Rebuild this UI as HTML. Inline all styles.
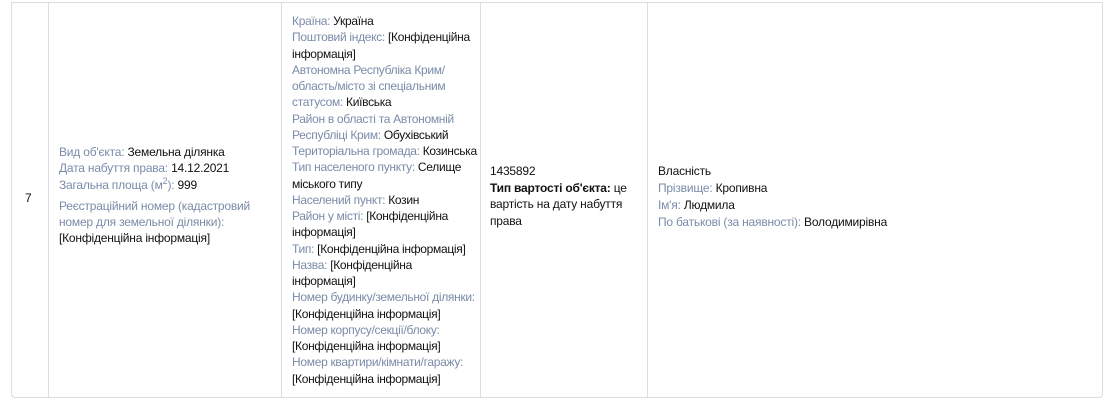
<!DOCTYPE html>
<html><head><meta charset="utf-8"><style>
*{margin:0;padding:0;box-sizing:border-box}
body{width:1116px;height:411px;background:#fff;font-family:"Liberation Sans",Arial,sans-serif;font-size:12px;color:#111;position:relative;overflow:hidden;letter-spacing:-0.2px}
.box{position:absolute;left:11px;top:2px;width:1092px;height:396px;border:1px solid #dcdde4;border-radius:0 0 4px 4px}
.v{position:absolute;top:2px;height:395px;width:1px;background:#dcdde4}
.c{position:absolute;line-height:16.25px;white-space:nowrap}
.l{color:#7a8ba8}
</style></head><body>
<div class="box"></div>
<div class="v" style="left:48px"></div>
<div class="v" style="left:281px"></div>
<div class="v" style="left:480px"></div>
<div class="v" style="left:647px"></div>
<div class="c" style="left:25px;top:190px">7</div>
<div class="c" style="left:59px;top:144px">
<div><span class="l">Вид об'єкта:</span> Земельна ділянка</div>
<div><span class="l">Дата набуття права:</span> 14.12.2021</div>
<div><span class="l">Загальна площа (м<sup style="font-size:9px;line-height:0">2</sup>):</span> 999</div>
<div style="margin-top:5px"><span class="l">Реєстраційний номер (кадастровий<br>номер для земельної ділянки):</span><br>[Конфіденційна інформація]</div>
</div>
<div class="c" style="left:292px;top:13px;letter-spacing:-0.3px">
<span class="l">Країна:</span> Україна<br>
<span class="l">Поштовий індекс:</span> [Конфіденційна<br>інформація]<br>
<span class="l">Автономна Республіка Крим/<br>область/місто зі спеціальним<br>статусом:</span> Київська<br>
<span class="l">Район в області та Автономній<br>Республіці Крим:</span> Обухівський<br>
<span class="l">Територіальна громада:</span> Козинська<br>
<span class="l">Тип населеного пункту:</span> Селище<br>міського типу<br>
<span class="l">Населений пункт:</span> Козин<br>
<span class="l">Район у місті:</span> [Конфіденційна<br>інформація]<br>
<span class="l">Тип:</span> [Конфіденційна інформація]<br>
<span class="l">Назва:</span> [Конфіденційна<br>інформація]<br>
<span class="l">Номер будинку/земельної ділянки:</span><br>[Конфіденційна інформація]<br>
<span class="l">Номер корпусу/секції/блоку:</span><br>[Конфіденційна інформація]<br>
<span class="l">Номер квартири/кімнати/гаражу:</span><br>[Конфіденційна інформація]
</div>
<div class="c" style="left:490px;top:163px;line-height:16.7px">
1435892<br>
<b>Тип вартості об'єкта:</b> це<br>вартість на дату набуття<br>права
</div>
<div class="c" style="left:658px;top:163px;line-height:17px">
Власність<br>
<span class="l">Прізвище:</span> Кропивна<br>
<span class="l">Ім'я:</span> Людмила<br>
<span class="l">По батькові (за наявності):</span> Володимирівна
</div>
</body></html>
